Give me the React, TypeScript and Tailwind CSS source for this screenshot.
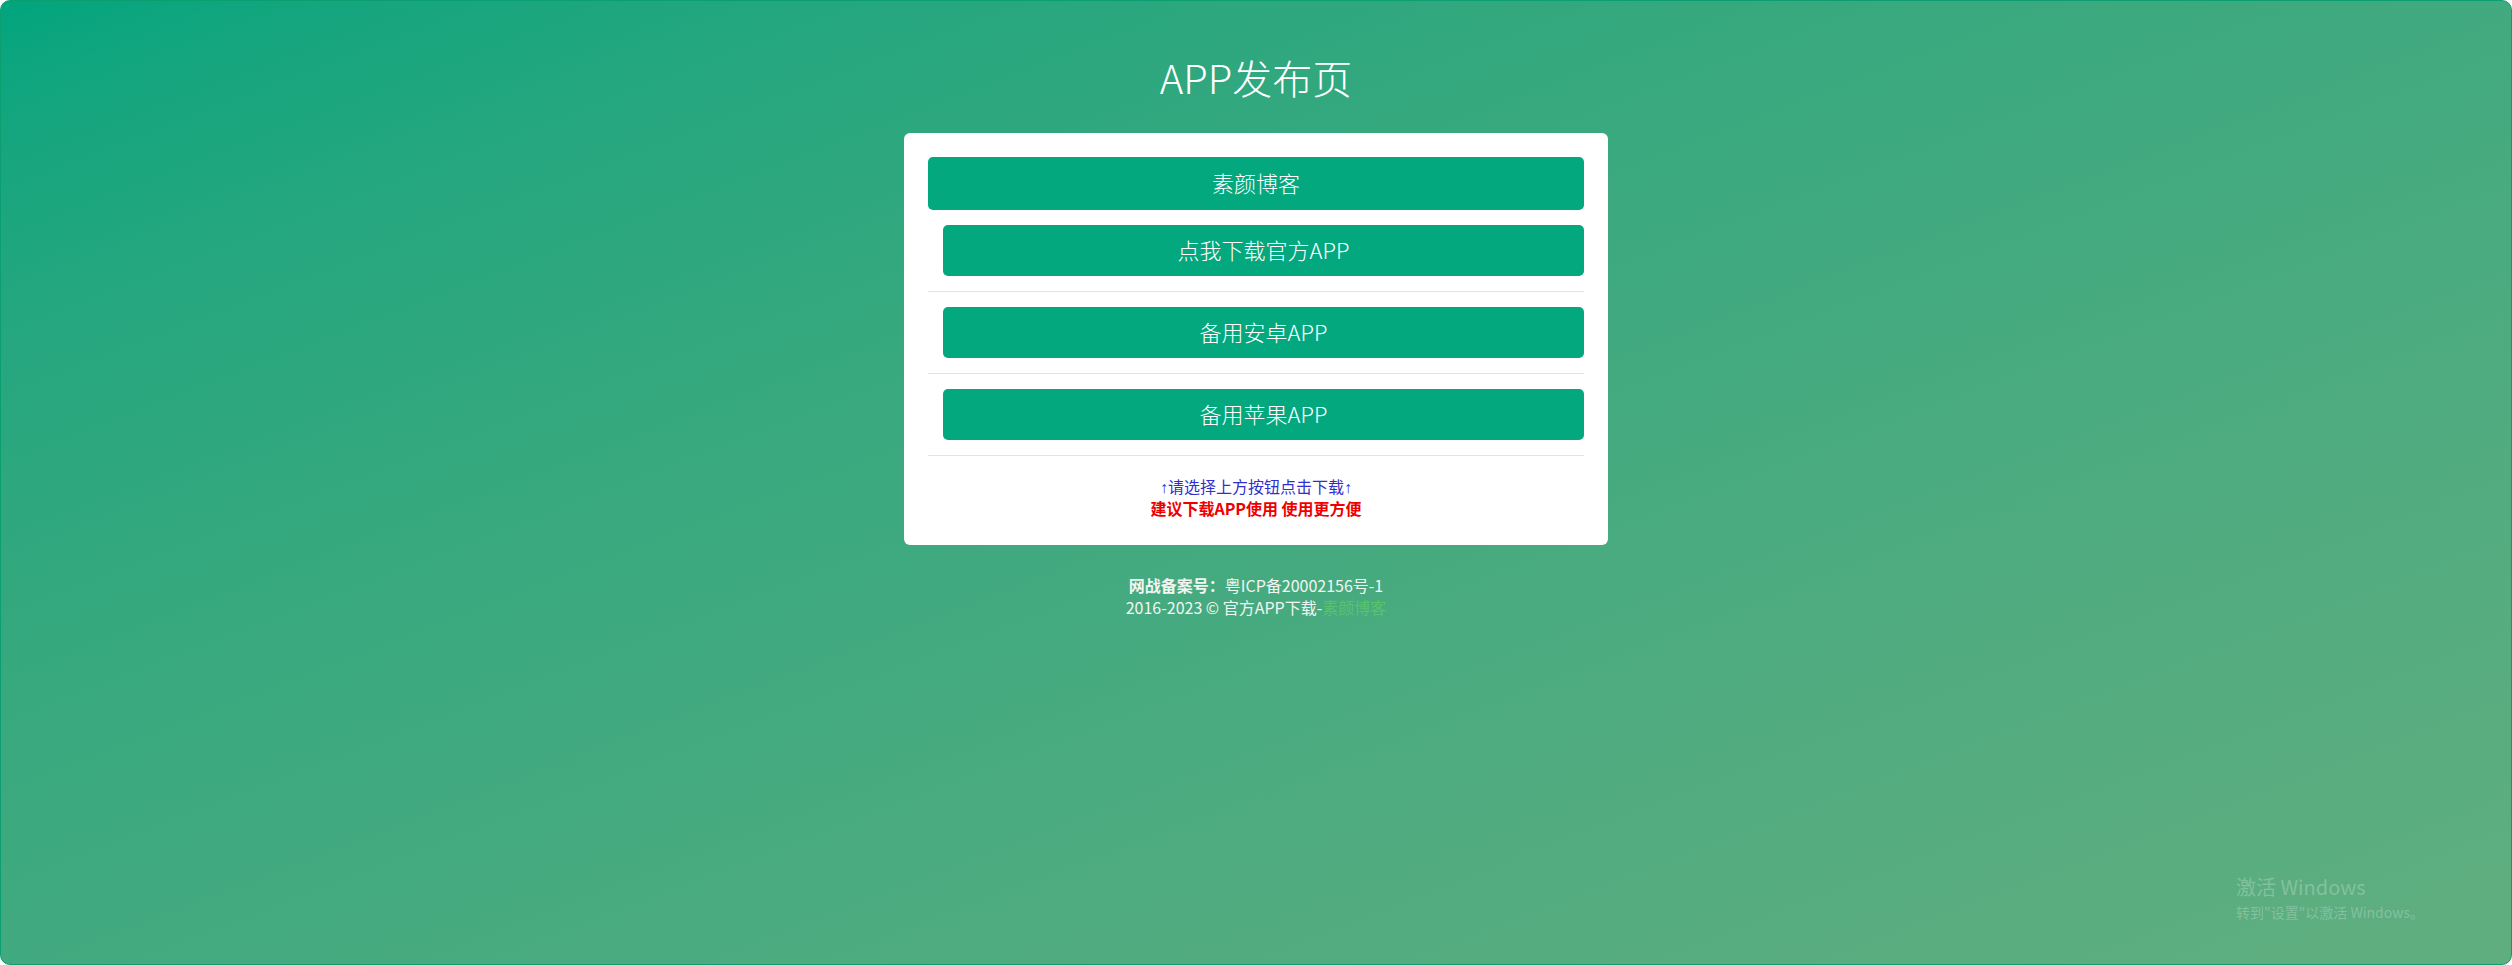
const cjk = "font-['Noto_Sans_CJK_SC','Noto_Sans',sans-serif]"

function AppButton({ label, tall }: { label: string; tall?: boolean }) {
  return (
    <a
      href="#"
      className={
        tall
          ? "flex h-[53px] items-center justify-center rounded-[5px] bg-[#03a87e] pb-[2px] text-[22px] font-light text-white"
          : "flex h-[51px] items-center justify-center rounded-[5px] bg-[#03a87e] pb-[2px] text-[22px] font-light text-white"
      }
    >
      {label}
    </a>
  )
}

export default function App() {
  const arrow = "font-['Liberation_Sans',sans-serif]"

  return (
    <div className={`${cjk} relative h-[965px] w-full overflow-hidden rounded-[10px] border border-[#0b9e70] bg-linear-to-br from-[#01a57e] to-[#60ae80]`}>
      <div className="flex flex-col items-center pt-[54px]">
        <h1 className="text-[40px] font-light leading-[44px] text-white">APP发布页</h1>

        <div className="mt-[34px] w-[704px] rounded-[6px] bg-white px-[24px] pt-[24px] pb-[26px]">
          <AppButton label="素颜博客" tall />

          <div className="pl-[15px] pt-[15px] pb-[15px]">
            <AppButton label="点我下载官方APP" />
          </div>
          <div className="border-t border-[#e3e3e3] pl-[15px] pt-[15px] pb-[15px]">
            <AppButton label="备用安卓APP" />
          </div>
          <div className="border-t border-[#e3e3e3] pl-[15px] pt-[15px] pb-[15px]">
            <AppButton label="备用苹果APP" />
          </div>

          <div className="border-t border-[#e3e3e3] pt-[20px] text-center text-[16px] leading-[21px]">
            <p className="text-[#3030cc]">
              <span className={arrow}>↑</span>请选择上方按钮点击下载<span className={arrow}>↑</span>
            </p>
            <p className="font-bold text-[#ee0000]">建议下载APP使用 使用更方便</p>
          </div>
        </div>

        <footer className="mt-[29px] text-center text-[16px] leading-[22px] text-[#f2f6f2]">
          <p>
            <span className="font-bold">网战备案号：</span>粤ICP备20002156号-1
          </p>
          <p>
            2016-2023 © 官方APP下载-<a href="#" className="text-[#55c46c]">素颜博客</a>
          </p>
        </footer>
      </div>

      <div className="pointer-events-none absolute left-[2235px] top-[874px] text-white/25">
        <p className="text-[20px] leading-[24px]">激活 Windows</p>
        <p className="mt-[4px] text-[14px] leading-[18px]">转到"设置"以激活 Windows。</p>
      </div>
    </div>
  )
}
